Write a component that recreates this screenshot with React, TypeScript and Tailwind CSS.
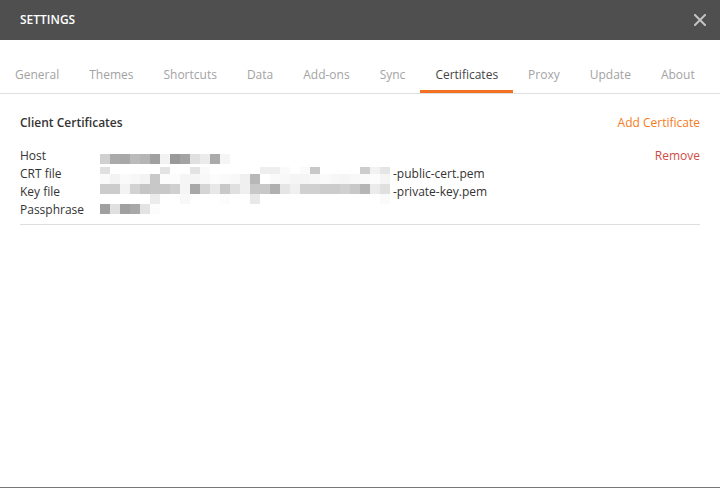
import React from 'react';

const tabs = ['General', 'Themes', 'Shortcuts', 'Data', 'Add-ons', 'Sync', 'Certificates', 'Proxy', 'Update', 'About'];

// blurred (mosaic) values, one row per strip; 10px cells starting at x=100
const mosaic: { top: number; h: number; cells: number[] }[] = [
  { top: 7, h: 10, cells: [208, 170, 168, 187, 181, 160, 242, 153, 163, 224, 235, 170, 245] },
  { top: 20, h: 7, cells: [224, 255, 255, 255, 255, 255, 227, 255, 255, 227, 250, 255, 255, 255, 255, 255, 238, 238, 250, 255, 250, 200, 255, 255, 255, 255, 204, 242, 229] },
  { top: 27, h: 10, cells: [250, 243, 250, 247, 243, 200, 252, 252, 245, 245, 248, 252, 250, 248, 240, 184, 255, 250, 248, 245, 245, 247, 250, 247, 245, 248, 250, 252, 245] },
  { top: 37, h: 10, cells: [204, 204, 243, 210, 197, 200, 200, 208, 245, 168, 213, 232, 200, 224, 240, 200, 200, 176, 229, 240, 208, 208, 204, 204, 208, 200, 181, 235, 224] },
  { top: 47, h: 10, cells: [255, 255, 255, 255, 255, 236, 255, 255, 248, 255, 255, 255, 252, 255, 255, 232, 255, 255, 255, 255, 255, 255, 255, 255, 255, 255, 255, 255, 250] },
  { top: 57, h: 10, cells: [160, 224, 160, 168, 227, 252] },
];

const grey = (v: number) => `rgb(${v},${v},${v})`;

const Mosaic = () => (
  <div className="absolute left-0 top-0">
    {mosaic.map((row, i) => (
      <div key={i} className="absolute left-0 flex" style={{ top: row.top, height: row.h }}>
        {row.cells.map((c, j) => (
          <div key={j} className="w-[10px] h-full" style={{ background: grey(c) }} />
        ))}
      </div>
    ))}
  </div>
);

export default function App() {
  return (
    <div className="w-[720px] h-[488px] bg-white flex flex-col border-b border-[#777] font-['Open_Sans',sans-serif]">
      <div className="h-[40px] bg-[#4f4f4f] flex items-center justify-between pl-[20px] pr-[14px] shrink-0">
        <span className="text-[12px] font-semibold text-white">SETTINGS</span>
        <svg width="12" height="12" viewBox="0 0 12 12">
          <path d="M1 1 L11 11 M11 1 L1 11" stroke="#c4c4c4" strokeWidth="2" strokeLinecap="square" />
        </svg>
      </div>

      <div className="flex h-[54px] border-b border-[#e0e0e0] shrink-0">
        {tabs.map((t) => (
          <div
            key={t}
            className={`px-[15px] pt-[27px] pb-[7px] text-[12px] leading-[16px] border-b-[3px] ${
              t === 'Certificates' ? 'border-[#f47023] text-[#444]' : 'border-transparent text-[#a3a3a3]'
            }`}
          >
            {t}
          </div>
        ))}
      </div>

      <div className="px-[20px] pt-[21px]">
        <div className="flex justify-between items-center text-[12px] leading-[16px]">
          <span className="font-semibold text-[#333]">Client Certificates</span>
          <span className="text-[#f47b23]">Add Certificate</span>
        </div>

        <div className="mt-[16px] flex text-[12px] leading-[18px] text-[#333]">
          <div className="w-[80px] flex flex-col">
            <span>Host</span>
            <span>CRT file</span>
            <span>Key file</span>
            <span>Passphrase</span>
          </div>
          <div className="relative flex-1 flex flex-col">
            <Mosaic />
            <span className="h-[18px]" />
            <span className="relative pl-[293px]">-public-cert.pem</span>
            <span className="relative pl-[293px]">-private-key.pem</span>
            <span className="h-[18px]" />
          </div>
          <div className="flex flex-col">
            <span className="text-[#cf4c45]">Remove</span>
          </div>
        </div>

        <div className="mt-[5px] border-t border-[#dedede]" />
      </div>
    </div>
  );
}
